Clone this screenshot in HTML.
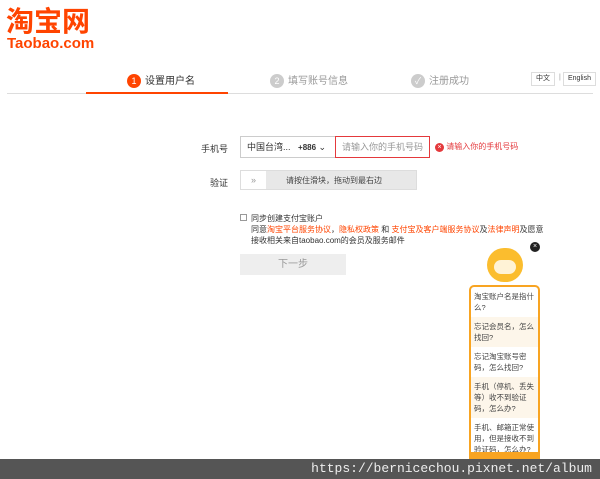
<!DOCTYPE html>
<html><head><meta charset="utf-8"><style>
*{margin:0;padding:0;box-sizing:border-box}
body{width:600px;height:479px;background:#fff;position:relative;overflow:hidden;font-family:"Liberation Sans","Noto Sans CJK SC",sans-serif;font-size:9px;color:#333}
.a{position:absolute}
.logo{left:6px;top:7px;color:#f40;font-size:28px;font-weight:bold;line-height:30px;letter-spacing:0px}
.logo2{left:7px;top:35px;color:#f40;font-size:15px;font-weight:bold}
.num{display:inline-block;width:14px;height:14px;border-radius:7px;color:#fff;text-align:center;line-height:14px;font-size:9px;margin-right:4px;vertical-align:middle}
.step{top:72px;font-size:10px}
.line{left:7px;top:93px;width:586px;height:1px;background:#ddd}
.lang{top:72px;height:14px;border:1px solid #ddd;font-size:7px;line-height:12px;padding:0 4px}
.in{height:22px;border:1px solid #ccc;line-height:20px}
</style></head><body>
<div class="a logo">淘宝网</div>
<div class="a logo2">Taobao.com</div>
<div class="a step" style="left:127px"><span class="num" style="background:#f40">1</span>设置用户名</div>
<div class="a step" style="left:270px;color:#999"><span class="num" style="background:#ccc">2</span>填写账号信息</div>
<div class="a step" style="left:411px;color:#999"><span class="num" style="background:#ccc">✓</span>注册成功</div>
<div class="a lang" style="left:531px">中文</div>
<div class="a" style="left:559px;top:74px;font-size:7px;color:#999">|</div>
<div class="a lang" style="left:563px">English</div>
<div class="a line"></div>
<div class="a" style="left:86px;top:92px;width:142px;height:2px;background:#f40"></div>

<div class="a" style="left:201px;top:142px;font-size:9px">手机号</div>
<div class="a in" style="left:240px;top:136px;width:96px;font-size:9px;padding-left:6px;background:#fff">中国台湾... &nbsp;&nbsp;<b style="font-size:8px">+886</b> ⌄</div>
<div class="a in" style="left:335px;top:136px;width:95px;border-color:#e4393c;color:#999;padding-left:6px">请输入你的手机号码</div>
<div class="a" style="left:435px;top:141px;color:#e4393c;font-size:8px"><span style="display:inline-block;width:9px;height:9px;border-radius:5px;background:#e4393c;color:#fff;font-size:7px;line-height:9px;text-align:center">×</span> 请输入你的手机号码</div>
<div class="a" style="left:210px;top:176px">验证</div>
<div class="a" style="left:240px;top:170px;width:177px;height:20px;background:#e8e8e8;border:1px solid #ddd"></div>
<div class="a" style="left:241px;top:171px;width:25px;height:18px;background:#fff;color:#999;text-align:center;line-height:18px">»</div>
<div class="a" style="left:286px;top:175px;font-size:8px;color:#444">请按住滑块，拖动到最右边</div>
<div class="a" style="left:240px;top:214px;width:7px;height:7px;border:1px solid #999"></div>
<div class="a" style="left:251px;top:213px;font-size:8px;line-height:11px">同步创建支付宝账户<br>同意<span style="color:#f40">淘宝平台服务协议</span>，<span style="color:#f40">隐私权政策</span> 和 <span style="color:#f40">支付宝及客户端服务协议</span>及<span style="color:#f40">法律声明</span>及愿意<br>接收相关来自taobao.com的会员及服务邮件</div>
<div class="a" style="left:240px;top:254px;width:106px;height:21px;background:#eee;color:#999;text-align:center;line-height:21px;font-size:10px">下一步</div>

<div class="a" style="left:487px;top:248px;width:36px;height:34px;border-radius:18px;background:#fbbd2e"></div>
<div class="a" style="left:494px;top:260px;width:22px;height:14px;border-radius:8px;background:#fff3d6"></div>
<div class="a" style="left:530px;top:242px;width:10px;height:10px;border-radius:5px;background:#222;color:#fff;font-size:7px;line-height:10px;text-align:center">×</div>
<div class="a" style="left:469px;top:285px;width:71px;height:180px;border:2px solid #f8a422;border-radius:5px;background:#fff;font-size:7.5px;line-height:11px;color:#444">
<div style="padding:4px 3px">淘宝账户名是指什么?</div>
<div style="padding:4px 3px;background:#fdf6ea">忘记会员名，怎么找回?</div>
<div style="padding:4px 3px">忘记淘宝账号密码，怎么找回?</div>
<div style="padding:4px 3px;background:#fdf6ea">手机（停机、丢失等）收不到验证码，怎么办?</div>
<div style="padding:4px 3px">手机、邮箱正常使用，但是接收不到验证码，怎么办?</div>
</div>
<div class="a" style="left:469px;top:452px;width:71px;height:10px;background:#f8a422"></div>
<div class="a" style="left:0;top:459px;width:600px;height:20px;background:#555;color:#eee;font-family:'Liberation Mono',monospace;font-size:13px;line-height:20px;text-align:right;padding-right:8px">https://bernicechou.pixnet.net/album</div>
</body></html>
